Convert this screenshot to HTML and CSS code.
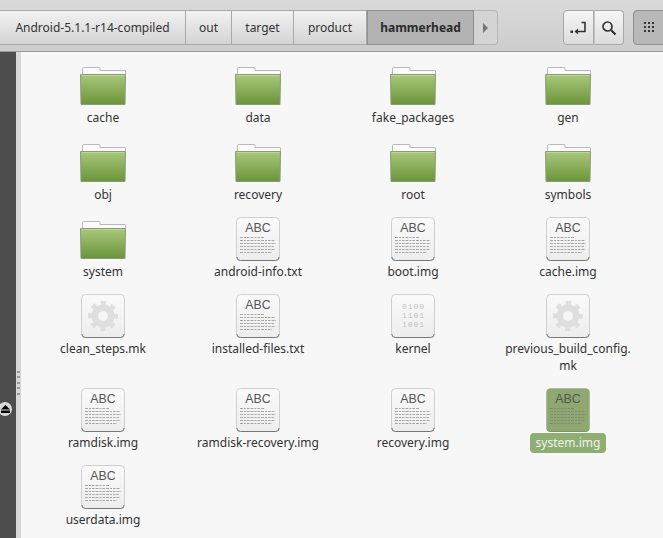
FILE: index.html
```html
<!DOCTYPE html>
<html lang="en">
<head>
  <meta charset="UTF-8" />
  <title>hammerhead</title>
  <link rel="stylesheet" href="styles.css">
</head>
<body>
  <svg class="defs" width="0" height="0" aria-hidden="true">
    <defs>
      <linearGradient id="folderFill" x1="0" y1="0" x2="0" y2="1">
        <stop offset="0" stop-color="#a9c87c"/>
        <stop offset="1" stop-color="#6b9439"/>
      </linearGradient>
      <linearGradient id="pageFill" x1="0" y1="0" x2="0" y2="1">
        <stop offset="0" stop-color="#fafafa"/>
        <stop offset="1" stop-color="#ededed"/>
      </linearGradient>
      <symbol id="folder" viewBox="0 0 48 40">
        <path d="M3.500 8V2.500Q3.500 1.500 4.500 1.500H20Q21 1.500 21 2.500V4.500H46Q46.500 4.500 46.500 5V9H3.500Z" fill="#fbfbfb" stroke="#b9b9b9"/>
        <path d="M1.500 8.500H46.500L46 38.500H2Z" fill="url(#folderFill)" stroke="#8b9c76"/>
        <path d="M2.500 9.500H45.500" stroke="#bdd69a"/>
      </symbol>
      <symbol id="page" viewBox="0 0 44 44">
        <rect x="0.500" y="0.500" width="43" height="43" rx="4" fill="url(#pageFill)" stroke="#cfcfcf"/>
        <path d="M0.800 40Q1 43.500 4.500 43.500H39.500Q43 43.500 43.200 40" fill="none" stroke="#777"/>
      </symbol>
      <symbol id="lines" viewBox="0 0 44 44">
        <g stroke="#777" stroke-width="0.600" stroke-dasharray="3 1 2 1 2.500 1" fill="none">
          <path d="M4 20.500H28"/>
          <path d="M4 23.500H39"/>
          <path d="M4 26.500H40"/>
          <path d="M4 29.500H38"/>
          <path d="M4 32.500H39"/>
          <path d="M4 35.500H36"/>
        </g>
      </symbol>
      <symbol id="gear" viewBox="0 0 44 44">
        <circle cx="22" cy="22" r="11.500" fill="#dedede"/>
        <circle cx="22" cy="22" r="13" fill="none" stroke="#dedede" stroke-width="4" stroke-dasharray="5.100 5.100" stroke-dashoffset="2.550"/>
        <circle cx="22" cy="22" r="5" fill="#f6f6f6"/>
      </symbol>
    </defs>
  </svg>

  <header class="toolbar">
    <nav class="pathbar">
      <a class="crumb crumb-first">Android-5.1.1-r14-compiled</a>
      <a class="crumb crumb-out">out</a>
      <a class="crumb crumb-target">target</a>
      <a class="crumb crumb-product">product</a>
      <a class="crumb crumb-active">hammerhead</a>
      <a class="crumb-next"><span class="arrow"></span></a>
    </nav>
    <div class="tools">
      <button class="tool tool-left">
        <svg width="18" height="16" viewBox="0 0 18 16"><path d="M11.500 2.500H15V11.500H7" fill="none" stroke="#333" stroke-width="1.600"/><path d="M8 8.500L4.500 11.500L8 14.500Z" fill="#333"/><rect x="0.500" y="10.500" width="2.500" height="2.500" fill="#333"/></svg>
      </button>
      <button class="tool tool-right">
        <svg width="16" height="16" viewBox="0 0 16 16"><circle cx="6.500" cy="6.500" r="4.500" fill="none" stroke="#333" stroke-width="1.700"/><path d="M10 10L14.500 14.500" stroke="#333" stroke-width="2.200"/></svg>
      </button>
    </div>
    <button class="tool-view">
      <svg width="11" height="11" viewBox="0 0 11 11" fill="#333"><rect width="2" height="2"/><rect x="4" width="2" height="2"/><rect x="8" width="2" height="2"/><rect y="4" width="2" height="2"/><rect x="4" y="4" width="2" height="2"/><rect x="8" y="4" width="2" height="2"/><rect y="8" width="2" height="2"/><rect x="4" y="8" width="2" height="2"/><rect x="8" y="8" width="2" height="2"/></svg>
    </button>
  </header>

  <div class="window">
    <aside class="sidebar">
      <span class="eject">
        <svg width="9" height="8" viewBox="0 0 9 8" fill="#000"><path d="M4.500 0L9 4.500H0Z"/><rect y="5.500" width="9" height="2.500"/></svg>
      </span>
    </aside>
    <div class="handle">
      <i></i><i></i><i></i><i></i><i></i>
    </div>
    <main class="files">
      <div class="item"><svg class="icon folder" width="48" height="40"><use href="#folder"/></svg><span class="label">cache</span></div>
      <div class="item"><svg class="icon folder" width="48" height="40"><use href="#folder"/></svg><span class="label">data</span></div>
      <div class="item"><svg class="icon folder" width="48" height="40"><use href="#folder"/></svg><span class="label">fake_packages</span></div>
      <div class="item"><svg class="icon folder" width="48" height="40"><use href="#folder"/></svg><span class="label">gen</span></div>

      <div class="item"><svg class="icon folder" width="48" height="40"><use href="#folder"/></svg><span class="label">obj</span></div>
      <div class="item"><svg class="icon folder" width="48" height="40"><use href="#folder"/></svg><span class="label">recovery</span></div>
      <div class="item"><svg class="icon folder" width="48" height="40"><use href="#folder"/></svg><span class="label">root</span></div>
      <div class="item"><svg class="icon folder" width="48" height="40"><use href="#folder"/></svg><span class="label">symbols</span></div>

      <div class="item"><svg class="icon folder" width="48" height="40"><use href="#folder"/></svg><span class="label">system</span></div>
      <div class="item"><svg class="icon" width="44" height="44" viewBox="0 0 44 44"><use href="#page"/><text class="abc" x="22" y="15">ABC</text><use href="#lines"/></svg><span class="label">android-info.txt</span></div>
      <div class="item"><svg class="icon" width="44" height="44" viewBox="0 0 44 44"><use href="#page"/><text class="abc" x="22" y="15">ABC</text><use href="#lines"/></svg><span class="label">boot.img</span></div>
      <div class="item"><svg class="icon" width="44" height="44" viewBox="0 0 44 44"><use href="#page"/><text class="abc" x="22" y="15">ABC</text><use href="#lines"/></svg><span class="label">cache.img</span></div>

      <div class="item"><svg class="icon" width="44" height="44" viewBox="0 0 44 44"><use href="#page"/><use href="#gear"/></svg><span class="label">clean_steps.mk</span></div>
      <div class="item"><svg class="icon" width="44" height="44" viewBox="0 0 44 44"><use href="#page"/><text class="abc" x="22" y="15">ABC</text><use href="#lines"/></svg><span class="label">installed-files.txt</span></div>
      <div class="item"><svg class="icon" width="44" height="44" viewBox="0 0 44 44"><use href="#page"/><text class="bits" x="22.500" y="15">0100</text><text class="bits" x="22.500" y="24">1101</text><text class="bits" x="22.500" y="33">1001</text></svg><span class="label">kernel</span></div>
      <div class="item"><svg class="icon" width="44" height="44" viewBox="0 0 44 44"><use href="#page"/><use href="#gear"/></svg><span class="label">previous_build_config.<br>mk</span></div>

      <div class="item"><svg class="icon" width="44" height="44" viewBox="0 0 44 44"><use href="#page"/><text class="abc" x="22" y="15">ABC</text><use href="#lines"/></svg><span class="label">ramdisk.img</span></div>
      <div class="item"><svg class="icon" width="44" height="44" viewBox="0 0 44 44"><use href="#page"/><text class="abc" x="22" y="15">ABC</text><use href="#lines"/></svg><span class="label">ramdisk-recovery.img</span></div>
      <div class="item"><svg class="icon" width="44" height="44" viewBox="0 0 44 44"><use href="#page"/><text class="abc" x="22" y="15">ABC</text><use href="#lines"/></svg><span class="label">recovery.img</span></div>
      <div class="item selected"><svg class="icon" width="44" height="44" viewBox="0 0 44 44"><use href="#page"/><rect class="tint" x="0.500" y="0.500" width="43" height="43" rx="4"/><text class="abc" x="22" y="15">ABC</text><use href="#lines"/></svg><span class="label">system.img</span></div>

      <div class="item"><svg class="icon" width="44" height="44" viewBox="0 0 44 44"><use href="#page"/><text class="abc" x="22" y="15">ABC</text><use href="#lines"/></svg><span class="label">userdata.img</span></div>
    </main>
  </div>
</body>
</html>
```

FILE: styles.css
```css
html, body {
  height: 100%;
}

body {
  margin: 0;
  display: flex;
  flex-direction: column;
  overflow: hidden;
  font-family: "Noto Sans", sans-serif;
  font-size: 12px;
  color: #333;
  background: #f7f7f7;
}

.defs {
  position: absolute;
}

.toolbar {
  display: flex;
  align-items: flex-start;
  flex: none;
  height: 52px;
  padding-top: 10px;
  box-sizing: border-box;
  background: linear-gradient(#dadada, #cdcdcd);
  border-bottom: 1px solid #9a9a9a;
}

.pathbar {
  display: flex;
  height: 35px;
}

.crumb {
  display: flex;
  align-items: center;
  justify-content: center;
  box-sizing: border-box;
  border: 1px solid #a8a8a8;
  border-left: 0;
  background: linear-gradient(#f2f2f2, #d4d4d4);
}

.crumb-first { width: 186px; }
.crumb-out { width: 46px; }
.crumb-target { width: 62px; }
.crumb-product { width: 73px; }

.crumb-active {
  width: 107px;
  font-weight: 700;
  color: #2b2b2b;
  background: #b3b3b3;
  border-left: 1px solid #8e8e8e;
  border-color: #8e8e8e;
}

.crumb-next {
  display: flex;
  align-items: center;
  justify-content: center;
  box-sizing: border-box;
  width: 24px;
  background: #d4d4d4;
  border: 1px solid #b5b5b5;
  border-left: 0;
  border-radius: 0 4px 4px 0;
}

.arrow {
  border-left: 5px solid #757575;
  border-top: 5px solid transparent;
  border-bottom: 5px solid transparent;
}

.tools {
  display: flex;
  margin-left: 65px;
}

.tool, .tool-view {
  display: flex;
  align-items: center;
  justify-content: center;
  box-sizing: border-box;
  height: 35px;
  padding: 0;
  border: 1px solid #a8a8a8;
}

.tool {
  background: linear-gradient(#f6f6f6, #dcdcdc);
}

.tool-left {
  width: 31px;
  border-radius: 4px 0 0 4px;
}

.tool-right {
  width: 30px;
  border-left: 1px solid #c4c4c4;
  border-radius: 0 4px 4px 0;
}

.tool-view {
  width: 40px;
  margin-left: 9px;
  justify-content: flex-start;
  padding-left: 10px;
  flex: none;
  background: #b8b8b8;
  border-color: #8e8e8e;
  border-radius: 4px 0 0 4px;
}

.window {
  display: flex;
  flex: 1;
  min-height: 0;
}

.sidebar {
  position: relative;
  width: 16px;
  flex: none;
  background: #4d4d4d;
}

.eject {
  position: absolute;
  left: -2px;
  top: 350px;
  display: flex;
  align-items: center;
  justify-content: center;
  width: 14px;
  height: 14px;
  border-radius: 50%;
  background: #d8d8d8;
}

.handle {
  display: flex;
  flex-direction: column;
  gap: 3.400px;
  align-items: center;
  width: 5px;
  flex: none;
  box-sizing: border-box;
  padding-top: 319px;
  background: #d8d8d8;
}

.handle i {
  width: 3px;
  height: 2px;
  background: #999;
}

.files {
  display: grid;
  grid-template-columns: repeat(4, 155px);
  grid-auto-rows: min-content;
  row-gap: 13px;
  padding: 10px 0 0 4.500px;
  flex: 1;
  min-width: 0;
  background: #f7f7f7;
}

.item {
  display: flex;
  flex-direction: column;
  align-items: center;
  text-align: center;
}

.icon {
  display: block;
  flex: none;
  margin: 1px 0 2px;
}

.folder {
  margin: 4px 0 3px;
}

.label {
  line-height: 17px;
  padding: 0 6px;
  white-space: nowrap;
}

.abc {
  font-family: "Liberation Sans", sans-serif;
  font-size: 12.300px;
  fill: #555;
  text-anchor: middle;
}

.bits {
  font-family: "Liberation Mono", monospace;
  font-size: 8px;
  letter-spacing: 0.950px;
  fill: #c2c2c2;
  text-anchor: middle;
}

.tint {
  fill: #8ea870;
}

.selected .label {
  padding: 1px 6px 2px;
  margin: -1px 0 -2px;
  border-radius: 4px;
  background: #8eae72;
  color: #f1f1f1;
}
```
